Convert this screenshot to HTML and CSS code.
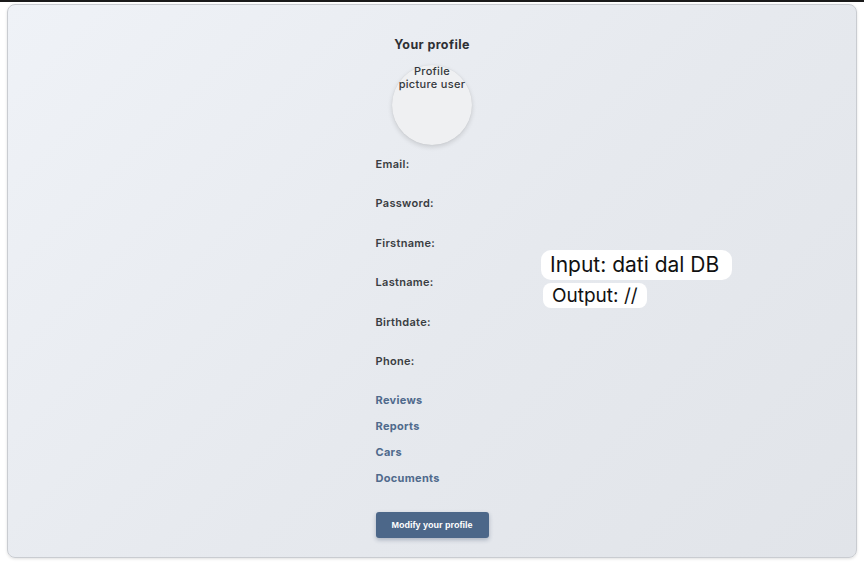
FILE: index.html
```html
<!DOCTYPE html>
<html>
<head>
<meta charset="utf-8">
<link rel="stylesheet" href="styles.css">
</head>
<body>
<div class="page">
  <div class="card">
    <div class="column">
      <h1 class="title">Your profile</h1>
      <div class="avatar"><span class="alt">Profile<br>picture user</span></div>
      <div class="fields">
        <div class="field">Email:</div>
        <div class="field">Password:</div>
        <div class="field">Firstname:</div>
        <div class="field">Lastname:</div>
        <div class="field">Birthdate:</div>
        <div class="field">Phone:</div>
      </div>
      <div class="links">
        <a class="link">Reviews</a>
        <a class="link">Reports</a>
        <a class="link">Cars</a>
        <a class="link">Documents</a>
      </div>
      <button class="btn">Modify your profile</button>
    </div>
  </div>
  <div class="note">
    <span class="pill pill-a">Input: dati dal DB</span>
    <span class="pill pill-b">Output: //</span>
  </div>
</div>
</body>
</html>
```
FILE: styles.css
```css
html, body { margin: 0; padding: 0; background: #ffffff; }
body { border-top: 2px solid #1a1a1a; font-family: "Inter", "DejaVu Sans", sans-serif; }
.page { position: relative; padding: 2px 7px 0 7px; height: 561px; box-sizing: border-box; }
.card {
  height: 554px; box-sizing: border-box;
  border: 1px solid #c9ccd1; border-radius: 8px;
  background: linear-gradient(135deg, #eff2f7 0%, #e6e9ee 55%, #e1e4e9 100%);
  box-shadow: 0 1px 3px rgba(0,0,0,0.12);
  display: flex; justify-content: center;
  padding-top: 32px;
}
.column { width: 113px; display: flex; flex-direction: column; align-items: flex-start; }
.title {
  margin: 0; align-self: center; font-size: 12.5px; line-height: 16px; letter-spacing: 0.4px;
  font-weight: 700; color: #2e3034; white-space: nowrap;
}
.avatar {
  align-self: center; width: 80px; height: 80px; border-radius: 50%;
  margin-top: 12px; background: #eff0f2;
  box-shadow: 0 2px 5px rgba(0,0,0,0.14), 0 0 1px rgba(0,0,0,0.1);
  display: flex; justify-content: center;
}
.alt {
  font-size: 11px; line-height: 13px; font-weight: 500; color: #35383c; letter-spacing: 0.3px;
  text-align: center; white-space: nowrap; margin-top: 0px;
}
.fields { margin-top: 12px; display: flex; flex-direction: column; gap: 25.4px; }
.field { font-size: 11px; line-height: 14px; font-weight: 600; color: #3a3d42; letter-spacing: 0.3px; }
.links { margin-top: 25px; display: flex; flex-direction: column; gap: 12px; }
.link { font-size: 11px; line-height: 14px; font-weight: 700; color: #4f6a8c; text-decoration: none; letter-spacing: 0.3px; }
.btn {
  margin-top: 27px; width: 113px; height: 26px; border: none; border-radius: 3px;
  background: #4c6789; color: #ffffff;
  font-family: "Liberation Sans", Arial, sans-serif; font-weight: 700; font-size: 9px;
  box-shadow: 0 2px 4px rgba(40,60,90,0.3);
  padding: 0;
}
.note { position: absolute; left: 541px; top: 248px; display: flex; flex-direction: column; align-items: flex-start; gap: 3px; }
.pill {
  background: #ffffff; color: #111111; font-family: "Inter", sans-serif;
  font-size: 21px; line-height: 30px; border-radius: 10px; padding: 0 13px 0 9px; white-space: nowrap;
}
.pill-b { margin-left: 2px; font-size: 19px; line-height: 25px; padding: 0 9px; border-radius: 8px; }
```
